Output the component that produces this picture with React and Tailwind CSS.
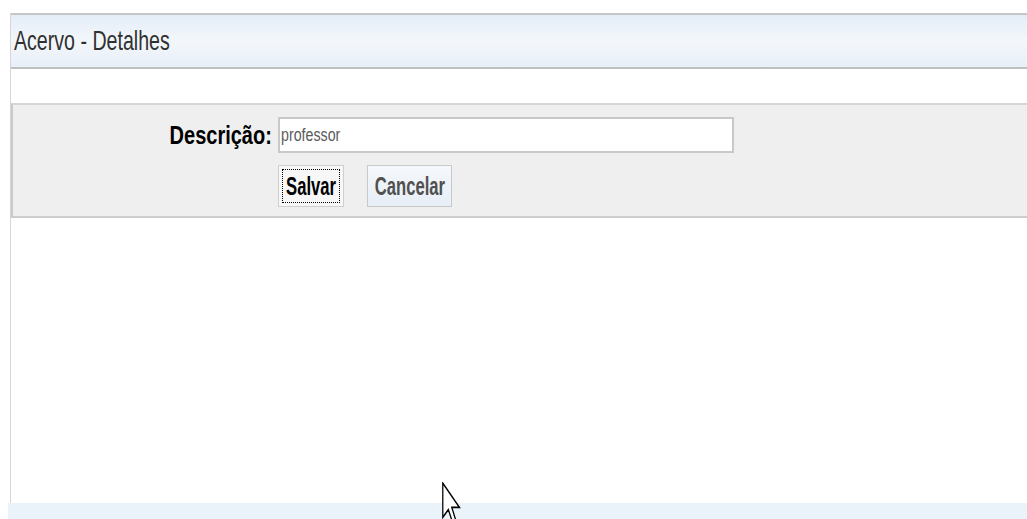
import React from 'react';

// Arrow pointer drawn over the page bottom
const Pointer = () => (
  <svg
    className="absolute left-[442px] top-[482px]"
    width="19"
    height="42"
    viewBox="0 0 12 19"
    preserveAspectRatio="none"
  >
    <path
      d="M0.5 0.5 L0.5 16 L4 12.5 L6.8 18.5 L8.8 17.6 L6.2 11.5 L11 11.5 Z"
      fill="#fff"
      stroke="#000"
      strokeWidth="0.8"
      strokeLinejoin="miter"
    />
  </svg>
);

const App = () => {
  return (
    <div className="relative h-[519px] w-full overflow-hidden bg-white font-['Liberation_Sans',Arial,sans-serif]">
      <div className="pt-[13px]">
        <div className="ml-[10px] h-[490px] border-l border-[#d6d6d6]">
          {/* page title */}
          <div className="flex h-[56px] items-center border-t-2 border-b-2 border-t-[#c6c6c6] border-b-[#bfbfbf] bg-gradient-to-b from-[#e4edf7] via-[#f3f7fb] to-[#e8eff8] pl-[3px]">
            <span className="inline-block origin-left scale-x-[0.7] whitespace-nowrap text-[28px] leading-none text-[#303030]">
              Acervo - Detalhes
            </span>
          </div>

          {/* edit form */}
          <div className="mt-[34px] h-[115px] border-t-2 border-b-2 border-l-2 border-t-[#d6d6d6] border-b-[#cdcdcd] border-l-[#cacaca] bg-[#efefef] pt-[12px]">
            <div className="grid grid-cols-[259px_456px] gap-x-[6px] gap-y-[12px]">
              <div className="flex h-[36px] items-center justify-end">
                <span className="inline-block origin-right scale-x-[0.8] whitespace-nowrap text-[25px] font-bold leading-none text-black">
                  Descrição:
                </span>
              </div>
              <div className="flex h-[36px] items-center overflow-hidden border-2 border-[#c9c9c9] bg-white pl-[1px]">
                <span className="inline-block origin-left scale-x-[0.79] whitespace-nowrap text-[18px] leading-none text-[#5a5a5a]">
                  professor
                </span>
              </div>

              <div />
              <div className="flex gap-[23px]">
                <button className="flex h-[42px] w-[66px] items-center justify-center border border-[#cfcfcf] bg-[#f7f7f7] p-[3px]">
                  <span className="flex h-full w-full items-center justify-center border border-dotted border-black">
                    <span className="inline-block scale-x-[0.64] text-[26px] font-bold leading-none text-black">
                      Salvar
                    </span>
                  </span>
                </button>
                <button className="flex h-[42px] w-[85px] items-center justify-center border border-[#c9c9c9] bg-gradient-to-b from-[#f5f8fc] to-[#e7eef6]">
                  <span className="inline-block scale-x-[0.64] text-[26px] font-bold leading-none text-[#505050]">
                    Cancelar
                  </span>
                </button>
              </div>
            </div>
          </div>
        </div>

        {/* footer strip */}
        <div className="ml-[8px] h-[16px] bg-[#eaf2fa]" />
      </div>

      <Pointer />
    </div>
  );
};

export default App;
